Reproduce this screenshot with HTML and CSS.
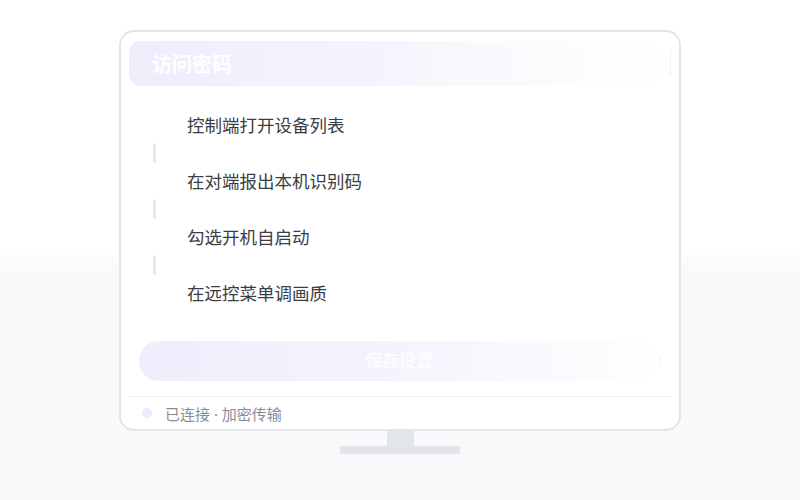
FILE: index.html
```html
<!DOCTYPE html>
<html lang="zh">
<head>
<meta charset="utf-8">
<link rel="stylesheet" href="styles.css">
</head>
<body>
<div class="scene">
  <div class="monitor">
    <div class="header-row">
      <div class="header">
        <span class="title">访问密码</span>
        <span class="dots"><i></i><i></i><i></i><i></i></span>
      </div>
      <div class="caret"></div>
    </div>
    <div class="steps">
      <div class="step"><span class="marker"></span><span class="label">控制端打开设备列表</span></div>
      <div class="link"></div>
      <div class="step"><span class="marker"></span><span class="label">在对端报出本机识别码</span></div>
      <div class="link"></div>
      <div class="step"><span class="marker"></span><span class="label">勾选开机自启动</span></div>
      <div class="link"></div>
      <div class="step"><span class="marker"></span><span class="label">在远控菜单调画质</span></div>
    </div>
    <div class="save-row">
      <div class="save">保存设置</div>
      <div class="tick"></div>
    </div>
    <div class="footer">
      <span class="status-dot"></span>
      <span class="status">已连接 · 加密传输</span>
    </div>
  </div>
  <div class="neck"></div>
  <div class="base"></div>
</div>
</body>
</html>
```
FILE: styles.css
```css
* { box-sizing: border-box; }
html, body { margin: 0; height: 100%; }
body {
  width: 800px;
  height: 500px;
  overflow: hidden;
  font-family: "Noto Sans", "Noto Sans CJK SC", sans-serif;
  background: linear-gradient(to bottom, #ffffff 0, #ffffff 250px, #fafafb 268px, #f9f9fb 100%);
}
.scene {
  padding-top: 30px;
  display: flex;
  flex-direction: column;
  align-items: center;
}
.monitor {
  width: 562px;
  height: 401px;
  background: #fff;
  border: 2px solid #e3e5ea;
  border-radius: 15px;
  padding: 9px 8px 0 8px;
  display: flex;
  flex-direction: column;
}
.header-row {
  display: flex;
  align-items: center;
}
.header {
  flex: 1;
  height: 45px;
  border-radius: 12px;
  background: linear-gradient(to right, #efedfc 0%, #f5f4fd 45%, #fbfbfe 75%, #ffffff 100%);
  display: flex;
  align-items: center;
  justify-content: space-between;
  padding: 2px 16px 0 23px;
}
.title {
  color: #ffffff;
  font-size: 20px;
  font-weight: 700;
  line-height: 1;
}
.dots { display: flex; gap: 8px; }
.dots i {
  display: block;
  width: 7px;
  height: 7px;
  border-radius: 50%;
  background: #ffffff;
}
.caret {
  width: 1px;
  height: 27px;
  margin-left: 1px;
  background: #eeeef3;
}
.steps {
  margin-top: 25px;
  padding-left: 14px;
  display: flex;
  flex-direction: column;
}
.step {
  display: flex;
  align-items: center;
  height: 28px;
  gap: 20px;
}
.marker {
  width: 24px;
  height: 24px;
  border-radius: 50%;
  background: #fff;
}
.label {
  font-size: 17.5px;
  color: #3a3d44;
  line-height: 28px;
}
.link {
  width: 3px;
  height: 20px;
  margin: 4px 0 4px 10px;
  border-radius: 2px;
  background: #e8e8f0;
}
.save-row {
  margin-top: 34px;
  padding: 0 10px;
  display: flex;
  align-items: center;
}
.save {
  flex: 1;
  height: 40px;
  border-radius: 20px;
  background: linear-gradient(to right, #efedfc 0%, #f5f4fd 50%, #fbfbfe 85%, #ffffff 100%);
  color: #ffffff;
  font-size: 17px;
  padding-bottom: 3px;
  display: flex;
  align-items: center;
  justify-content: center;
}
.tick {
  width: 1px;
  height: 9px;
  margin-left: 1px;
  background: #f0f0f4;
}
.footer {
  margin-top: 15px;
  border-top: 1px solid #eceef2;
  height: 33px;
  display: flex;
  align-items: center;
  padding-left: 13px;
  gap: 13px;
}
.status-dot {
  width: 10px;
  height: 10px;
  border-radius: 50%;
  background: #eeecfb;
}
.status {
  font-size: 15px;
  color: #878c96;
}
.neck {
  width: 27px;
  height: 15px;
  background: #e2e5ea;
}
.base {
  width: 120px;
  height: 8px;
  background: #e1e4e9;
}
```
